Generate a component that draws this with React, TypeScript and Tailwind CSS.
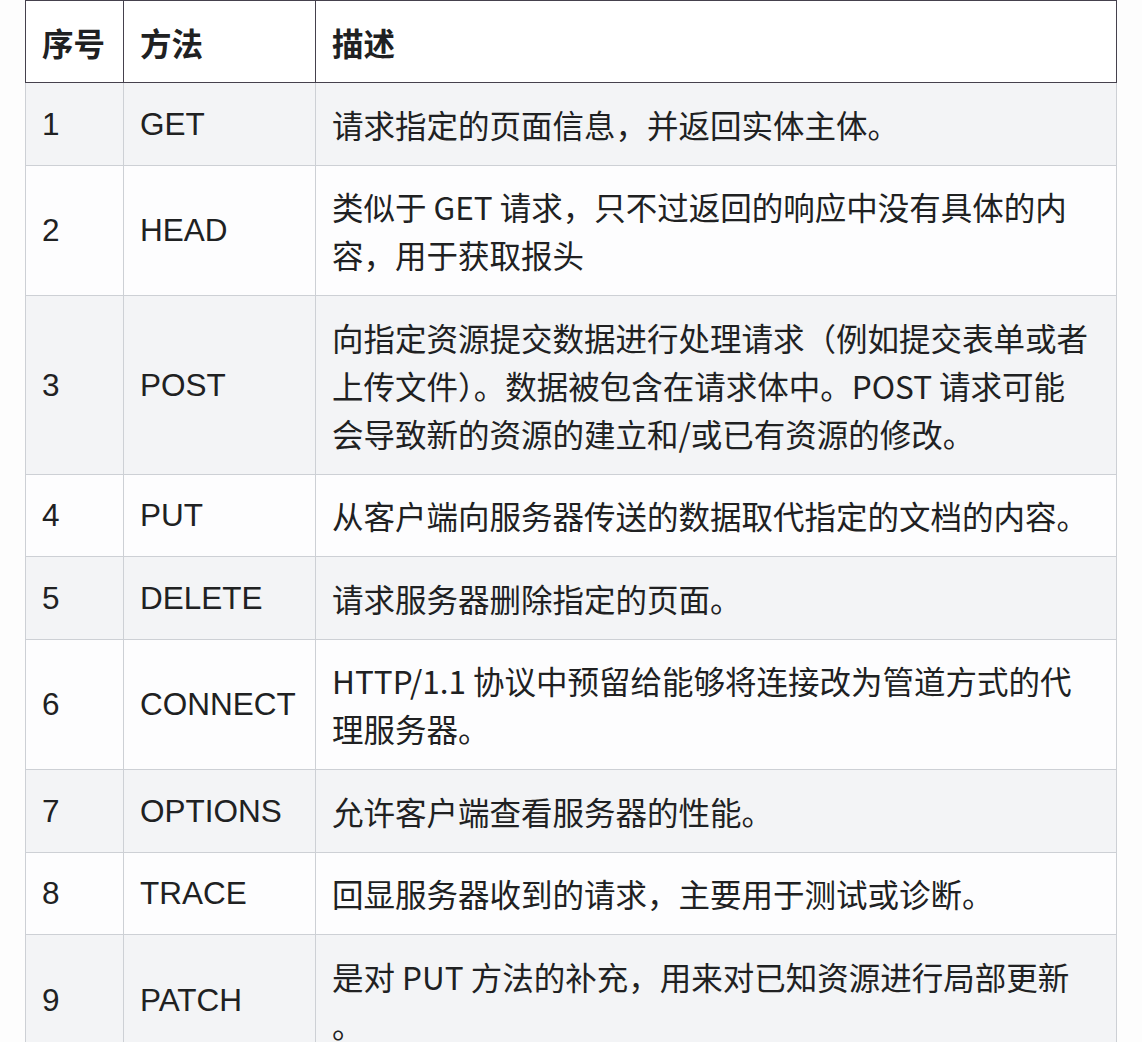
import React from "react";

type Row = { n: string; m: string; lines: string[] };

const rows: Row[] = [
  { n: "1", m: "GET", lines: ["请求指定的页面信息，并返回实体主体。"] },
  { n: "2", m: "HEAD", lines: ["类似于 GET 请求，只不过返回的响应中没有具体的内", "容，用于获取报头"] },
  {
    n: "3",
    m: "POST",
    lines: [
      "向指定资源提交数据进行处理请求（例如提交表单或者",
      "上传文件）。数据被包含在请求体中。POST 请求可能",
      "会导致新的资源的建立和/或已有资源的修改。",
    ],
  },
  { n: "4", m: "PUT", lines: ["从客户端向服务器传送的数据取代指定的文档的内容。"] },
  { n: "5", m: "DELETE", lines: ["请求服务器删除指定的页面。"] },
  { n: "6", m: "CONNECT", lines: ["HTTP/1.1 协议中预留给能够将连接改为管道方式的代", "理服务器。"] },
  { n: "7", m: "OPTIONS", lines: ["允许客户端查看服务器的性能。"] },
  { n: "8", m: "TRACE", lines: ["回显服务器收到的请求，主要用于测试或诊断。"] },
  { n: "9", m: "PATCH", lines: ["是对 PUT 方法的补充，用来对已知资源进行局部更新", "。"] },
];

export default function App() {
  return (
    <div className="min-h-[1042px] w-[1142px] overflow-hidden bg-[#fdfdfd] text-[#202122]">
      <table className="ml-[25px] w-[1091px] table-fixed border-collapse text-[31.5px] leading-[48px]">
        <colgroup>
          <col className="w-[98px]" />
          <col className="w-[192px]" />
          <col className="w-[801px]" />
        </colgroup>
        <thead>
          <tr className="bg-white font-['Noto_Sans_CJK_SC',sans-serif] font-bold">
            <th className="border border-[#45414d] px-4 py-[16.5px] text-left">序号</th>
            <th className="border border-[#45414d] px-4 py-[16.5px] text-left">方法</th>
            <th className="border border-[#45414d] px-4 py-[16.5px] text-left">描述</th>
          </tr>
        </thead>
        <tbody>
          {rows.map((r, i) => (
            <tr key={r.n} className={i % 2 === 0 ? "bg-[#f3f4f6]" : "bg-[#fdfdfe]"}>
              <td className="border border-[#cdd0d5] px-4 py-[16.75px] align-middle font-['Liberation_Sans','Noto_Sans_CJK_SC',sans-serif]">
                {r.n}
              </td>
              <td className="border border-[#cdd0d5] px-4 py-[16.75px] align-middle font-['Liberation_Sans','Noto_Sans_CJK_SC',sans-serif]">
                {r.m}
              </td>
              <td className="border border-[#cdd0d5] px-4 py-[16.75px] align-middle font-['Noto_Sans_CJK_SC',sans-serif]">
                {r.lines.map((l, j) => (
                  <div key={j} className="whitespace-nowrap">
                    {l}
                  </div>
                ))}
              </td>
            </tr>
          ))}
        </tbody>
      </table>
    </div>
  );
}
